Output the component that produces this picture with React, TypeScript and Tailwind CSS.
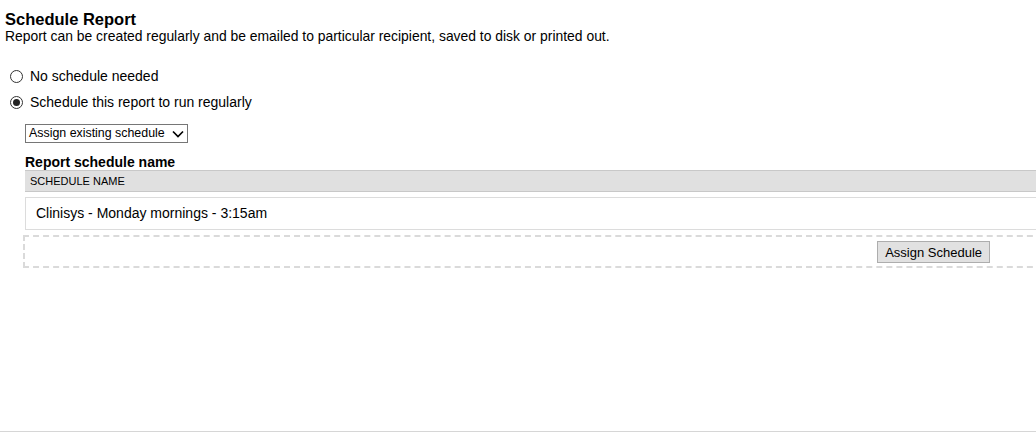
import React from "react";

function Radio({ checked }: { checked?: boolean }) {
  return (
    <span className="flex h-[13px] w-[13px] items-center justify-center rounded-full border border-[#333333] bg-white">
      {checked && <span className="h-[7px] w-[7px] rounded-full bg-[#222222]" />}
    </span>
  );
}

export default function App() {
  return (
    <div
      className="relative h-[435px] w-[1036px] overflow-hidden bg-white text-black"
      style={{ fontFamily: '"Liberation Sans", Arial, sans-serif' }}
    >
      <div className="h-[432px] border-b border-[#d6d6d6]">
        <div className="pl-[5px] pt-[9px]">
          <h1 className="text-[16.5px] font-bold leading-[20px]">Schedule Report</h1>
          <p className="text-[13.9px] leading-[15px]">
            Report can be created regularly and be emailed to particular recipient, saved to disk or printed out.
          </p>
        </div>

        <div className="mt-[24px] flex flex-col gap-[10px] pl-[10px]">
          <label className="flex h-[16px] items-center gap-[7px] text-[14px]">
            <Radio />
            <span>No schedule needed</span>
          </label>
          <label className="flex h-[16px] items-center gap-[7px] text-[14px]">
            <Radio checked />
            <span>Schedule this report to run regularly</span>
          </label>
        </div>

        <div className="mt-[14px] pl-[25px]">
          <div className="flex h-[19px] w-[163px] items-center justify-between border border-[#767676] bg-white pl-[3px] pr-[3px] text-[12.4px] leading-none">
            <span>Assign existing schedule</span>
            <svg width="12" height="8" viewBox="0 0 12 8" fill="none">
              <path d="M1 1.5 L6 6.5 L11 1.5" stroke="#000" strokeWidth="1.7" />
            </svg>
          </div>

          <div className="mt-[11px] text-[14px] font-bold leading-[16px]">Report schedule name</div>
          <div className="flex h-[22px] w-[1040px] items-center border-y border-[#c8c8c8] bg-[#e0e0e0] pl-[5px] text-[11px] uppercase">
            Schedule name
          </div>
          <div className="mt-[5px] flex h-[33px] w-[1040px] items-center border border-[#dcdcdc] bg-white pl-[10px] text-[14px]">
            Clinisys - Monday mornings - 3:15am
          </div>
        </div>

        <div className="ml-[23px] mt-[5px] flex h-[33px] w-[1040px] items-center justify-end border-2 border-dashed border-[#dadada] pr-[71px]">
          <button className="mt-[1px] h-[22px] border border-[#adadad] bg-[#e1e1e1] px-[7px] text-[13px] leading-none text-black">
            Assign Schedule
          </button>
        </div>
      </div>
    </div>
  );
}
